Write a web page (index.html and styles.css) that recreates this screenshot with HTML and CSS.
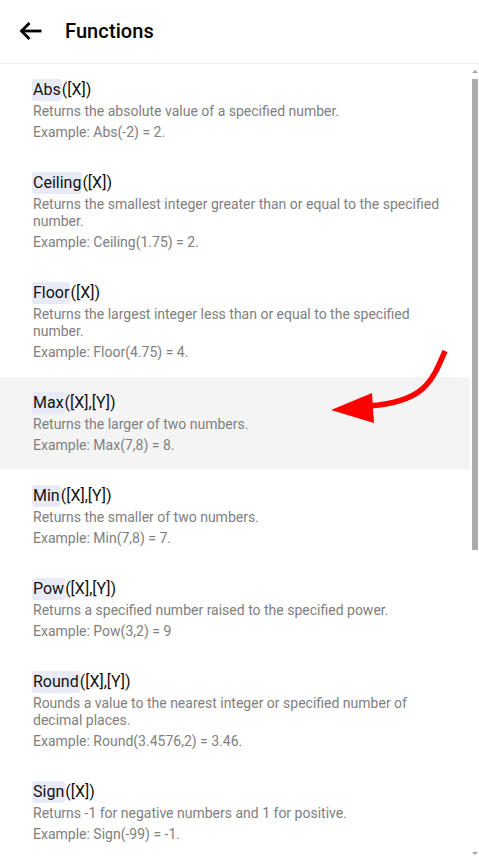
FILE: index.html
```html
<!DOCTYPE html>
<html lang="en">
<head>
<meta charset="utf-8">
<title>Functions</title>
<link rel="stylesheet" href="styles.css">
</head>
<body>
<div class="app">
  <header class="header">
    <svg class="back" width="24" height="20" viewBox="0 0 24 20" aria-hidden="true">
      <path d="M2.5 10H22.5" stroke="#000" stroke-width="2.8" fill="none"/>
      <path d="M10.5 2L2.5 10L10.5 18" stroke="#000" stroke-width="2.8" fill="none" stroke-linejoin="miter"/>
    </svg>
    <h1 class="heading">Functions</h1>
  </header>
  <div class="body">
    <div class="list">
      <div class="item">
        <div class="title"><span class="fn">Abs</span>([X])</div>
        <div class="desc">Returns the absolute value of a specified number.</div>
        <div class="example">Example: Abs(-2) = 2.</div>
      </div>
      <div class="item">
        <div class="title"><span class="fn">Ceiling</span>([X])</div>
        <div class="desc">Returns the smallest integer greater than or equal to the specified number.</div>
        <div class="example">Example: Ceiling(1.75) = 2.</div>
      </div>
      <div class="item">
        <div class="title"><span class="fn">Floor</span>([X])</div>
        <div class="desc">Returns the largest integer less than or equal to the specified number.</div>
        <div class="example">Example: Floor(4.75) = 4.</div>
      </div>
      <div class="item active">
        <div class="title"><span class="fn">Max</span>([X],[Y])</div>
        <div class="desc">Returns the larger of two numbers.</div>
        <div class="example">Example: Max(7,8) = 8.</div>
      </div>
      <div class="item">
        <div class="title"><span class="fn">Min</span>([X],[Y])</div>
        <div class="desc">Returns the smaller of two numbers.</div>
        <div class="example">Example: Min(7,8) = 7.</div>
      </div>
      <div class="item">
        <div class="title"><span class="fn">Pow</span>([X],[Y])</div>
        <div class="desc">Returns a specified number raised to the specified power.</div>
        <div class="example">Example: Pow(3,2) = 9</div>
      </div>
      <div class="item">
        <div class="title"><span class="fn">Round</span>([X],[Y])</div>
        <div class="desc">Rounds a value to the nearest integer or specified number of decimal places.</div>
        <div class="example">Example: Round(3.4576,2) = 3.46.</div>
      </div>
      <div class="item">
        <div class="title"><span class="fn">Sign</span>([X])</div>
        <div class="desc">Returns -1 for negative numbers and 1 for positive.</div>
        <div class="example">Example: Sign(-99) = -1.</div>
      </div>
    </div>
    <div class="scrollbar" aria-hidden="true">
      <div class="sb-btn"><span class="tri-up"></span></div>
      <div class="sb-thumb"></div>
      <div class="sb-track"></div>
      <div class="sb-btn"><span class="tri-down"></span></div>
    </div>
  </div>
  <svg class="annot" width="479" height="860" viewBox="0 0 479 860" aria-hidden="true">
    <path d="M445 351 C 432 382, 424 402, 368 406" stroke="#ff0000" stroke-width="5.5" fill="none"/>
    <polygon points="331,410 372,393 374,423" fill="#ff0000"/>
  </svg>
</div>
</body>
</html>
```

FILE: styles.css
```css
* { box-sizing: border-box; }
html, body { margin: 0; padding: 0; }
body {
  background: #fff;
  font-family: Roboto, "Liberation Sans", sans-serif;
  color: #111;
}
.app {
  position: relative;
  width: 479px;
  height: 860px;
  display: flex;
  flex-direction: column;
  overflow: hidden;
}
.header {
  flex: 0 0 64px;
  display: flex;
  align-items: center;
  padding-left: 19px;
  border-bottom: 1px solid #eeeeee;
  padding-bottom: 1px;
}
.back { display: block; margin-right: 22px; }
.heading {
  margin: 0;
  font-size: 20px;
  font-weight: 500;
  color: #000;
  letter-spacing: 0.1px;
}
.body {
  flex: 1 1 auto;
  display: flex;
  min-height: 0;
}
.list {
  flex: 1 1 auto;
  overflow: hidden;
}
.scrollbar {
  flex: 0 0 9px;
  display: flex;
  flex-direction: column;
  background: #fff;
}
.sb-btn {
  flex: 0 0 14px;
  display: flex;
  align-items: center;
  justify-content: center;
  padding-left: 1px;
}
.tri-up {
  width: 0;
  height: 0;
  border-left: 3px solid transparent;
  border-right: 3px solid transparent;
  border-bottom: 3px solid #a3a3a3;
}
.tri-down {
  width: 0;
  height: 0;
  border-left: 3px solid transparent;
  border-right: 3px solid transparent;
  border-top: 3px solid #a3a3a3;
}
.sb-thumb {
  flex: 0 0 471px;
  margin: 1px 1px 0 2px;
  background: #ababab;
}
.sb-track { flex: 1 1 auto; }
.item {
  padding: 15px 20px 16px 33px;
}
.item.active { background: #f4f4f4; }
.title {
  font-size: 16px;
  line-height: 22px;
  color: #111;
}
.fn {
  display: inline-block;
  background: #e8eaf7;
  border-radius: 3px;
  margin-left: -1px;
  padding: 0 1px;
}
.desc {
  margin-top: 2px;
  font-size: 14px;
  line-height: 17px;
  color: #808080;
}
.example {
  margin-top: 4px;
  font-size: 14px;
  line-height: 17px;
  color: #808080;
}
.annot {
  position: absolute;
  left: 0;
  top: 0;
  pointer-events: none;
}
```
